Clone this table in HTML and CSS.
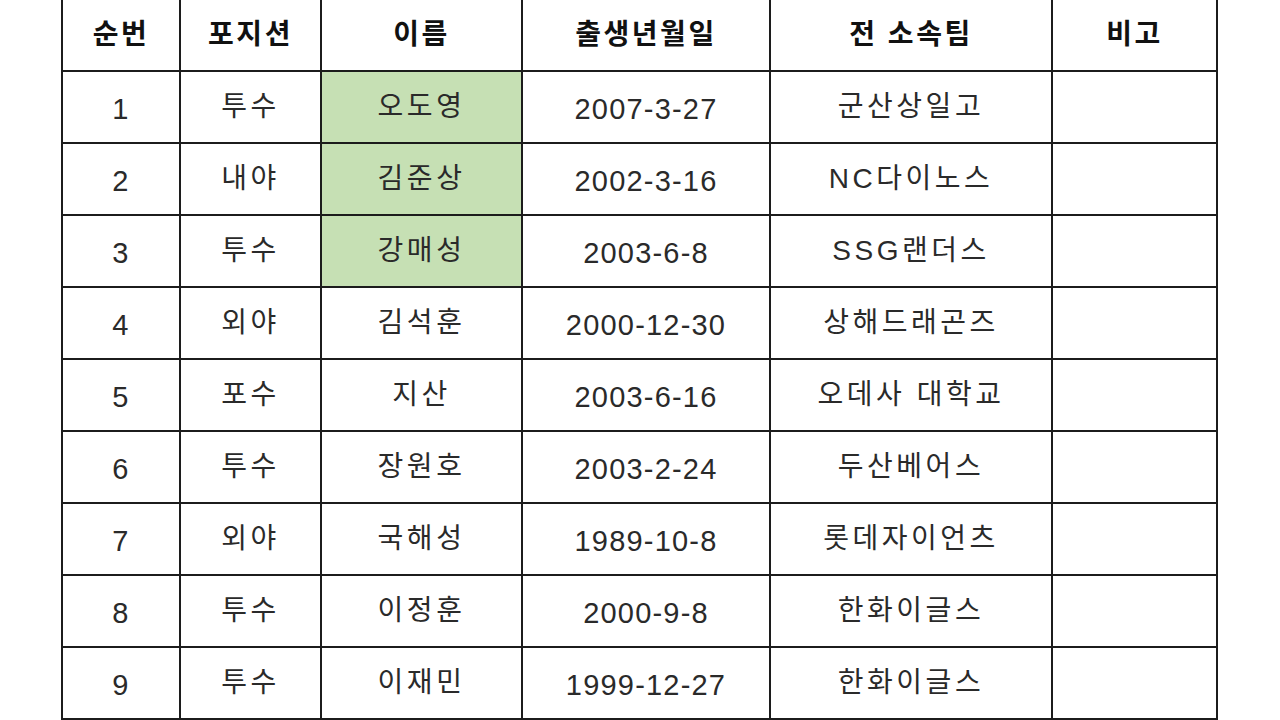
FILE: index.html
```html
<!DOCTYPE html>
<html lang="ko">
<head>
<meta charset="utf-8">
<link rel="stylesheet" href="styles.css">
</head>
<body>
<table class="roster">
  <colgroup>
    <col class="c1"><col class="c2"><col class="c3"><col class="c4"><col class="c5"><col class="c6">
  </colgroup>
  <thead>
    <tr><th>순번</th><th>포지션</th><th>이름</th><th>출생년월일</th><th>전 소속팀</th><th>비고</th></tr>
  </thead>
  <tbody>
    <tr><td class="num">1</td><td>투수</td><td class="hl">오도영</td><td class="num">2007-3-27</td><td>군산상일고</td><td></td></tr>
    <tr><td class="num">2</td><td>내야</td><td class="hl">김준상</td><td class="num">2002-3-16</td><td>NC다이노스</td><td></td></tr>
    <tr><td class="num">3</td><td>투수</td><td class="hl">강매성</td><td class="num">2003-6-8</td><td>SSG랜더스</td><td></td></tr>
    <tr><td class="num">4</td><td>외야</td><td>김석훈</td><td class="num">2000-12-30</td><td>상해드래곤즈</td><td></td></tr>
    <tr><td class="num">5</td><td>포수</td><td>지산</td><td class="num">2003-6-16</td><td>오데사 대학교</td><td></td></tr>
    <tr><td class="num">6</td><td>투수</td><td>장원호</td><td class="num">2003-2-24</td><td>두산베어스</td><td></td></tr>
    <tr><td class="num">7</td><td>외야</td><td>국해성</td><td class="num">1989-10-8</td><td>롯데자이언츠</td><td></td></tr>
    <tr><td class="num">8</td><td>투수</td><td>이정훈</td><td class="num">2000-9-8</td><td>한화이글스</td><td></td></tr>
    <tr><td class="num">9</td><td>투수</td><td>이재민</td><td class="num">1999-12-27</td><td>한화이글스</td><td></td></tr>
  </tbody>
</table>
</body>
</html>
```

FILE: styles.css
```css
html, body {
  margin: 0;
  padding: 0;
  background: #ffffff;
  overflow: hidden;
}
body {
  font-family: "Liberation Sans", "Noto Sans CJK KR", sans-serif;
  color: #2a2a2a;
}
.roster {
  border-collapse: collapse;
  table-layout: fixed;
  width: 1157px;
  margin: -2px 0 0 61px;
}
.c1 { width: 118px; }
.c2 { width: 141px; }
.c3 { width: 201px; }
.c4 { width: 248px; }
.c5 { width: 282px; }
.c6 { width: 165px; }
.roster tr {
  height: 72px;
}
.roster th,
.roster td {
  border: 2px solid #1c1c1c;
  text-align: center;
  vertical-align: middle;
  padding: 0;
  font-size: 28px;
  letter-spacing: 3.5px;
  line-height: 1;
}
.roster th {
  font-weight: 700;
  color: #111111;
  letter-spacing: 2.5px;
}
.roster td.num {
  font-size: 29px;
  letter-spacing: 1.2px;
  padding-top: 4px;
}
.roster td.hl {
  background: #c6e0b4;
}
```
